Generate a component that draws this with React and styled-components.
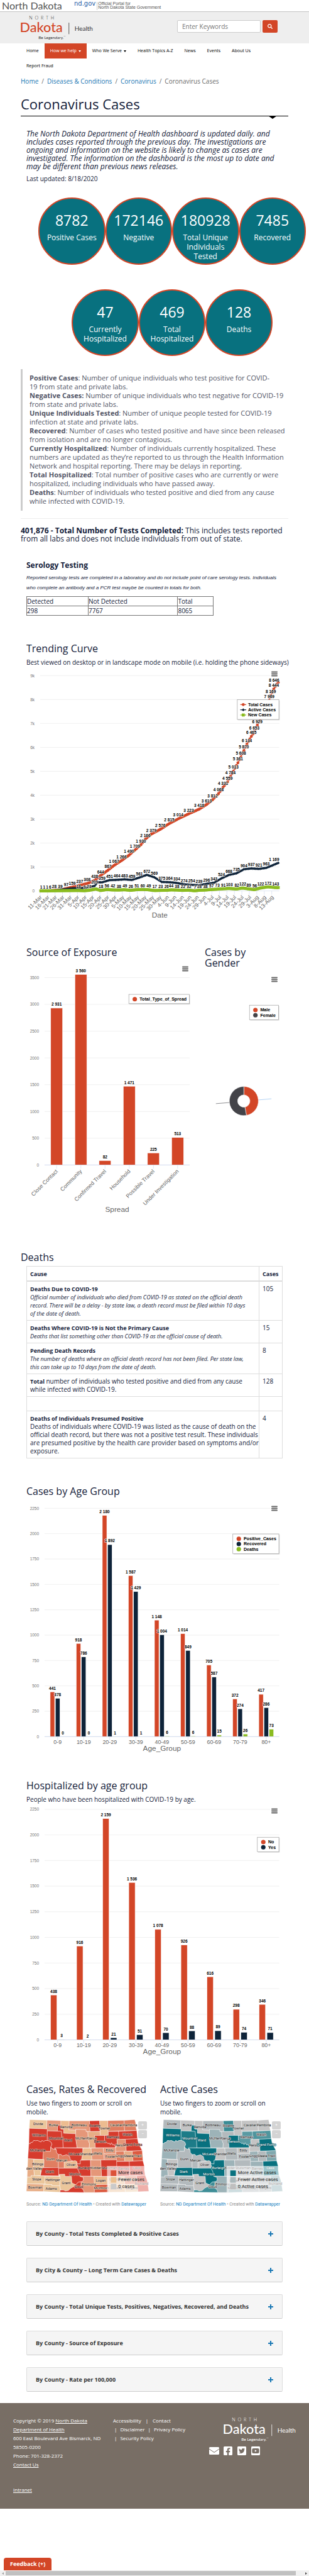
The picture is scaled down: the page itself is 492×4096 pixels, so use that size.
import React from "react";
import styled, { createGlobalStyle } from "styled-components";
import { FaSearch, FaFacebookSquare, FaTwitterSquare, FaYoutubeSquare } from "react-icons/fa";

const RED = "#d34627";
const NAVY = "#0e2339";
const GREEN = "#8bbc21";
const TEAL = "#08717f";
const INK = "#14213a";
const BLUE = "#1a78b4";
const HELV = '"Liberation Sans", Arial, sans-serif';

const Global = createGlobalStyle`
  *, *::before, *::after { box-sizing: border-box; }
  body {
    margin: 0;
    background: #fff;
    color: ${INK};
    font: 400 10px/14px "Open Sans", sans-serif;
  }
  p, h1, h2, h3, ul, dl, dd, blockquote { margin: 0; padding: 0; }
  ul { list-style: none; }
  svg { display: block; }
`;

/* ---------- frame ---------- */
const Page = styled.div`
  display: flex;
  flex-direction: column;
  min-height: 100vh;
`;
const Portal = styled.div`
  display: flex;
  height: 19px;
  padding-left: 3px;
  border-bottom: 1px solid #c4c4c4;
  color: #555;
`;
const PortalName = styled.span`
  width: 115px;
  font: 16px/18px Lato, sans-serif;
`;
const PortalSite = styled.a`
  padding-right: 2px;
  font: 10px/12px "DejaVu Sans", sans-serif;
  color: #2660a8;
  text-decoration: none;
`;
const PortalNote = styled.span`
  height: 13px;
  margin-top: 3px;
  padding-left: 1px;
  border-left: 1px solid #ccc;
  font: 7px/6px ${HELV};
`;
const Header = styled.header`
  display: flex;
  align-items: center;
  justify-content: space-between;
  height: 50px;
  padding: 0 50px 0 33px;
  background: #eee;
`;
const Search = styled.form`
  display: flex;
  gap: 3px;
  padding-top: 4px;
  margin-bottom: 8px;
`;
const SearchBox = styled.input`
  width: 133px;
  height: 20px;
  padding: 0 7px;
  border: 1px solid #ccc;
  border-radius: 2px;
  background: #fff;
  font: 10px "Open Sans", sans-serif;
  &::placeholder { color: #777; opacity: 1; }
`;
const SearchButton = styled.button`
  display: flex;
  align-items: center;
  justify-content: center;
  width: 24px;
  height: 20px;
  padding: 0;
  border: 0;
  border-radius: 2px;
  background: ${RED};
  color: #fff;
`;
const Nav = styled.nav`
  display: flex;
  flex-wrap: wrap;
  padding: 0 33px;
`;
const NavLink = styled.a`
  display: flex;
  align-items: center;
  gap: 3px;
  height: 24px;
  padding: 0 9px;
  font-size: 7px;
  text-decoration: none;
  color: ${(p) => (p.$active ? "#fff" : "#000")};
  background: ${(p) => (p.$active ? RED : "transparent")};
`;
const Caret = styled.i`
  border: 2px solid transparent;
  border-top: 3px solid currentColor;
  border-bottom: 0;
  margin-top: 1px;
`;
const Main = styled.main`
  padding: 5px 33px 18px;
`;
const Crumbs = styled.nav`
  display: flex;
  gap: 5px;
  color: #6b6b6b;
  a { color: ${BLUE}; text-decoration: none; }
`;
const Title = styled.h1`
  position: relative;
  margin-top: 14px;
  padding-bottom: 4px;
  border-bottom: 1px solid #000;
  font: 400 22px/30px "Open Sans", sans-serif;
  &::after {
    content: "";
    position: absolute;
    right: 18px;
    top: 100%;
    border: 7px solid transparent;
    border-top: 5px solid #000;
    border-bottom: 0;
  }
`;
const Inset = styled.section`
  padding: 0 9px;
  margin-top: ${(p) => p.$gap}px;
`;
const Section = styled.section`
  margin-top: ${(p) => p.$gap}px;
`;
const Intro = styled.p`
  font: italic 12px/13px "Open Sans", sans-serif;
`;
const Updated = styled.p`
  margin-top: 6px;
`;

/* ---------- figures in circles ---------- */
const Circles = styled.ul`
  display: flex;
  justify-content: center;
  margin: ${(p) => p.$gap}px -28px 0 28px;
`;
const Circle = styled.li`
  flex: 0 0 25%;
  aspect-ratio: 1;
  padding-top: 20px;
  border: 2px solid ${RED};
  border-radius: 50%;
  background: ${TEAL};
  color: #fff;
  text-align: center;
  font-size: 12px;
  line-height: 15px;
  b { display: block; margin-bottom: 6px; font: 400 23px/28px "Open Sans", sans-serif; }
  span { display: block; padding: 0 10px; }
`;

/* ---------- text blocks and tables ---------- */
const Definitions = styled.blockquote`
  margin-top: 21px;
  padding: 7px 0 8px 11px;
  border-left: 3px solid #ccc;
  color: #525566;
  font-size: 11px;
`;
const TotalTests = styled.p`
  margin-top: 12px;
  padding-top: 12px;
  border-top: 1px solid #eee;
  font-size: 12px;
  line-height: 13px;
`;
const SmallHeading = styled.h2`
  font: 700 12px/16px "Open Sans", sans-serif;
`;
const Note = styled.p`
  margin: 4px 0 5px;
  font: italic 8px/16px ${HELV};
`;
const Serology = styled.table`
  width: 73%;
  border: 1px solid #333;
  border-collapse: collapse;
  th, td { height: 15px; padding: 0; border: 1px solid #777; text-align: left; font-weight: 400; line-height: 14px; }
  th:nth-child(1) { width: 33%; }
  th:nth-child(2) { width: 48%; }
`;
const Heading = styled.h2`
  font: 400 16px/17px "Open Sans", sans-serif;
`;
const Sub = styled.p`
  margin-top: 6px;
  white-space: ${(p) => (p.$oneLine ? "nowrap" : "normal")};
`;
const DeathTable = styled.table`
  width: 100%;
  border-collapse: collapse;
  line-height: 13px;
  th, td { padding: 5px 0 4px 5px; border: 1px solid #ddd; text-align: left; vertical-align: top; }
  thead th { border-bottom: 2px solid #ddd; }
  th:last-child, td:last-child { width: 37px; }
  tr { height: 23px; }
  th, b, i { font-size: 9px; }
`;

/* ---------- charts ---------- */
const Split = styled.div`
  display: grid;
  grid-template-columns: ${(p) => p.$cols};
  gap: 18px;
  padding: 0 9px;
  margin-top: ${(p) => p.$gap}px;
`;
const Figure = styled.div`
  position: relative;
  margin-top: ${(p) => p.$gap}px;
  > svg { width: 100%; height: auto; overflow: visible; font-family: ${HELV}; }
`;
const MenuButton = styled.button`
  position: absolute;
  top: 4px;
  right: 8px;
  padding: 0;
  border: 0;
  background: none;
`;

const fmt = (v) => (v >= 1000 ? `${Math.floor(v / 1000)} ${String(v % 1000).padStart(3, "0")}` : String(v));

const Menu = () => (
  <MenuButton type="button" aria-label="Chart menu">
    <svg width="10" height="9" viewBox="0 0 10 9" stroke="#666" strokeWidth="2" strokeLinecap="round">
      <path d="M1 1.5H9M1 4.5H9M1 7.5H9" />
    </svg>
  </MenuButton>
);

const DataLabel = ({ x, y, children }) => (
  <text x={x} y={y} fontSize="11" fontWeight="700" textAnchor="middle" fill="#000" stroke="#fff" strokeWidth="2" strokeLinejoin="round" paintOrder="stroke">
    {children}
  </text>
);

const Legend = ({ x, y, width, items, line }) => (
  <g>
    <rect x={x + 2} y={y + 2} width={width} height={items.length * 14 + 11} fill="#000" opacity="0.15" />
    <rect x={x} y={y} width={width} height={items.length * 14 + 11} fill="#fff" stroke="#909090" />
    {items.map(([name, color], i) => {
      const cy = y + 13 + i * 14;
      return (
        <g key={name} fill={color}>
          {line && <path d={`M${x + 8} ${cy}h16`} stroke={color} strokeWidth="2" />}
          {!line && <circle cx={x + 16} cy={cy} r="6" />}
          {line && i === 0 && <circle cx={x + 16} cy={cy} r="4" />}
          {line && i === 1 && <path d={`M${x + 16} ${cy - 4}l4 4l-4 4l-4 -4z`} />}
          {line && i === 2 && <rect x={x + 12} y={cy - 4} width="8" height="8" />}
          <text x={x + 29} y={cy + 4} fontSize="12" fontWeight="700" fill="#000">{name}</text>
        </g>
      );
    })}
  </g>
);

const Grid = ({ left, right, top, bottom, ticks, cut }) => (
  <g>
    {ticks.map((t, i) => {
      const y = bottom - ((bottom - top) * i) / (ticks.length - 1);
      const last = i === ticks.length - 1;
      return (
        <g key={t}>
          <path d={`M${left} ${y}H${last && cut ? right - 24 : right}`} stroke={i ? "#e6e6e6" : "#ccd6eb"} />
          <text x={left - 15} y={y + 4} fontSize="11" textAnchor="end" fill="#777">{t}</text>
        </g>
      );
    })}
  </g>
);

const BarChart = ({ label, width, height, left, right, top, bottom, step, ticks, cut, cats, series, barWidth, pitch, axisTitle, titleY, slanted, legend }) => {
  const slot = (right - left) / cats.length;
  const unit = (bottom - top) / (step * (ticks.length - 1));
  return (
    <svg viewBox={`0 0 ${width} ${height}`} role="img" aria-label={label}>
      <Grid {...{ left, right, top, bottom, ticks, cut }} />
      {series.map((s, si) =>
        s.values.map((v, ci) => {
          const x = left + slot * (ci + 0.5) + (si - (series.length - 1) / 2) * pitch;
          const h = v * unit;
          return (
            <rect key={`${si}-${ci}`} x={x - barWidth / 2} y={bottom - h} width={barWidth} height={h} fill={s.color} stroke="#fff" />
          );
        })
      )}
      <path d={`M${left} ${bottom}H${right}`} stroke="#ccd6eb" />
      {series.map((s, si) =>
        s.values.map((v, ci) => (
          <DataLabel key={`${si}-${ci}`} x={left + slot * (ci + 0.5) + (si - (series.length - 1) / 2) * pitch} y={bottom - v * unit - 6}>
            {fmt(v)}
          </DataLabel>
        ))
      )}
      {cats.map((c, i) => {
        const x = left + slot * (i + 0.5);
        return (
          <g key={c}>
            <path d={`M${x} ${bottom}v10`} stroke="#ccd6eb" />
            {slanted ? (
              <text fontSize="15" fill="#666" textAnchor="end" transform={`translate(${x + 4} ${bottom + 18}) rotate(-45)`}>{c}</text>
            ) : (
              <text x={x} y={bottom + 19} fontSize="15" fill="#666" textAnchor="middle">{c}</text>
            )}
          </g>
        );
      })}
      <text x={(left + right) / 2} y={titleY} fontSize="20" fill="#666" textAnchor="middle">{axisTitle}</text>
      {legend}
    </svg>
  );
};

/* [day since 11 March, value] */
const TOTAL = [[0, 1], [5, 6], [9, 28], [13, 39], [17, 97], [21, 159], [26, 237], [31, 308], [36, 438], [40, 644], [45, 867], [49, 1067], [54, 1266], [59, 1490], [63, 1709], [67, 1930], [70, 2166], [74, 2379], [80, 2576], [86, 2815], [92, 3014], [99, 3223], [106, 3418], [111, 3613], [115, 3812], [119, 4068], [122, 4331], [125, 4559], [127, 4784], [129, 5013], [132, 5361], [134, 5608], [136, 5870], [138, 6134], [141, 6465], [143, 6653], [145, 6929], [153, 7969], [154, 8169], [156, 8444], [158, 8646]];
const ACTIVE = [[0, 1], [9, 20], [20, 100], [30, 130], [36, 209], [38, 359], [41, 359], [46, 451], [51, 464], [56, 483], [61, 459], [66, 561], [71, 672], [76, 569], [81, 375], [86, 364], [91, 334], [96, 274], [101, 254], [106, 239], [111, 296], [116, 343], [121, 524], [126, 668], [131, 735], [136, 904], [141, 937], [146, 921], [151, 963], [159, 1169]];
const NEW = [[0, 1], [2, 1], [4, 1], [6, 6], [25, 18], [29, 9], [32, 23], [37, 80], [40, 18], [44, 56], [48, 42], [52, 38], [56, 49], [60, 26], [64, 51], [68, 60], [72, 49], [76, 17], [80, 23], [84, 26], [87, 44], [91, 38], [95, 22], [99, 32], [103, 7], [106, 28], [110, 38], [114, 57], [118, 73], [122, 91], [126, 103], [131, 82], [135, 122], [139, 89], [143, 56], [147, 122], [152, 172], [157, 143]];
const DATES = "11-Mar 16-Mar 21-Mar 26-Mar 31-Mar 5-Apr 10-Apr 15-Apr 20-Apr 25-Apr 30-Apr 5-May 10-May 15-May 20-May 25-May 30-May 4-Jun 9-Jun 14-Jun 19-Jun 24-Jun 29-Jun 4-Jul 9-Jul 14-Jul 19-Jul 24-Jul 29-Jul 3-Aug 8-Aug 13-Aug".split(" ");

const daily = (keys) => {
  const out = [];
  for (let i = 0; i < keys.length - 1; i++) {
    const [a, va] = keys[i];
    const [b, vb] = keys[i + 1];
    for (let d = a; d < b; d++) out.push([d, va + ((vb - va) * (d - a)) / (b - a)]);
  }
  out.push(keys[keys.length - 1]);
  return out;
};

const TrendChart = () => {
  const px = (d) => 39 + d * 4.02;
  const py = (v) => 598 - v * 0.0643;
  const total = daily([...TOTAL, [159, 8720]]);
  const active = daily(ACTIVE);
  const fresh = daily([...NEW, [159, 140]]);
  const path = (pts) => "M" + pts.map(([d, v]) => `${px(d)} ${py(v)}`).join("L");
  return (
    <svg viewBox="0 0 690 690" role="img" aria-label="Trending curve">
      <Grid left={37} right={681} top={19} bottom={598} ticks={["0", "1k", "2k", "3k", "4k", "5k", "6k", "7k", "8k", "9k"]} cut />
      {DATES.map((t, i) => (
        <g key={t}>
          <path d={`M${37 + i * 20.12} 598v10`} stroke="#ccd6eb" />
          <text fontSize="15" fill="#666" textAnchor="end" transform={`translate(${43 + i * 20.12} 616) rotate(-45)`}>{t}</text>
        </g>
      ))}
      <path d={path(total)} stroke={RED} strokeWidth="2" fill="none" />
      {total.map(([d, v]) => <circle key={d} cx={px(d)} cy={py(v)} r="4" fill={RED} />)}
      <path d={path(active)} stroke={NAVY} strokeWidth="2" fill="none" />
      {active.map(([d, v]) => <path key={d} d={`M${px(d)} ${py(v) - 4}l4 4l-4 4l-4 -4z`} fill={NAVY} />)}
      {fresh.map(([d, v]) => <rect key={d} x={px(d) - 4} y={py(v) - 4} width="8" height="8" fill={GREEN} />)}
      {TOTAL.slice(2).map(([d, v]) => <DataLabel key={d} x={Math.min(px(d), 667)} y={py(v) - 6}>{fmt(v)}</DataLabel>)}
      {ACTIVE.filter(([d]) => d > 30 && d !== 38).map(([d, v]) => <DataLabel key={d} x={Math.min(px(d), 667)} y={py(v) - 6}>{fmt(v)}</DataLabel>)}
      {NEW.filter(([d]) => d !== 37).map(([d, v]) => <DataLabel key={d} x={px(d) + 1} y={py(v) - 6}>{v}</DataLabel>)}
      <text x="359" y="669" fontSize="20" fill="#666" textAnchor="middle">Date</text>
      <Legend line x={568} y={84} width={112} items={[["Total Cases", RED], ["Active Cases", NAVY], ["New Cases", GREEN]]} />
    </svg>
  );
};

const AGES = ["0-9", "10-19", "20-29", "30-39", "40-49", "50-59", "60-69", "70-79", "80+"];
const AGE_TICKS = [0, 250, 500, 750, 1000, 1250, 1500, 1750, 2000, 2250];

const GenderChart = () => (
  <svg viewBox="0 0 209 400" role="img" aria-label="Cases by gender">
    <path d="M144 337L179 334" stroke="#7cb5ec" />
    <path d="M66 344L30 347" stroke="#434348" />
    <path d="M105 301A39 39 0 0 1 111.800 378.400L107.900 356.200A16.500 16.500 0 0 0 105 323.500Z" fill={RED} stroke="#fff" />
    <path d="M111.800 378.400A39 39 0 1 1 105 301V323.500A16.500 16.500 0 1 0 107.900 356.200Z" fill="#434348" stroke="#fff" />
    <Legend x={120} y={83} width={78} items={[["Male", RED], ["Female", "#434348"]]} />
  </svg>
);

/* ---------- county maps ---------- */
const A = "#d63b2d", B = "#dc5a40", C = "#e07e61", D = "#e59779", E = "#e8ad86", F = "#ecbc90", G = "#ebc69b";
const L = "#c4c4c4", M = "#b3babd", N = "#9db3b8", T = TEAL;
/* name, outline, case colour, active colour, label x, label y */
const COUNTIES = [
  ["Divide", "57,22 197,27 194,97 53,92", G, M, 125, 66],
  ["Burke", "197,27 309,30 309,68 283,66 281,114 199,113 194,97", D, L, 248, 78],
  ["Renville", "309,30 376,32 374,104 428,106 428,136 331,132 331,100 309,98", F, L, 353, 93],
  ["Bottineau", "376,32 540,32 545,118 512,118 512,102 429,100 428,106 374,104", D, M, 456, 75],
  ["Rolette", "540,32 622,30 626,116 545,118", A, "#3a8b94", 583, 81],
  ["Towner", "622,30 688,30 692,148 628,150 626,116", F, L, 660, 99],
  ["Cavalier", "688,30 820,28 824,112 690,116", C, L, 757, 77],
  ["Pembina", "820,28 906,22 914,50 912,70 922,110 824,112", C, L, 869, 75],
  ["Williams", "53,92 198,97 199,190 182,190 170,198 156,190 148,203 120,190 106,193 90,190 78,206 66,206 62,216 50,214", A, T, 132, 158],
  ["Mountrail", "199,113 314,116 316,160 325,190 327,248 258,250 262,264 240,258 227,242 236,222 230,205 215,194 199,190", A, "#1d7c88", 270, 182],
  ["Ward", "283,66 309,68 309,98 331,100 331,132 428,136 431,190 440,248 327,248 325,190 316,160 314,116 281,114", A, T, 367, 197],
  ["McHenry", "429,100 512,102 512,118 527,120 531,190 540,215 538,250 440,248 431,190 428,136", D, N, 484, 183],
  ["Pierce", "527,118 626,118 628,150 582,150 582,175 587,246 586,250 538,250 540,215 531,190", E, M, 558, 183],
  ["Benson", "582,150 662,150 662,208 680,206 690,216 700,210 708,224 718,208 728,226 740,222 748,236 750,248 587,248", A, T, 626, 206],
  ["Ramsey", "692,118 776,116 778,180 762,182 766,238 748,236 740,222 728,226 718,208 708,224 700,210 690,216 680,206 662,208 662,150 692,148", A, "#5a9aa2", 730, 171],
  ["Walsh", "776,116 922,110 928,176 778,182", A, "#4f959d", 848, 153],
  ["Nelson", "762,182 830,180 838,276 752,280 750,248 766,236", D, L, 796, 236],
  ["Grand Forks", "830,180 928,176 936,215 955,250 966,272 838,276", A, T, 888, 234],
  ["McKenzie", "50,214 62,216 66,206 78,206 90,190 106,193 120,190 148,203 156,190 170,198 182,190 199,190 215,194 230,205 236,222 227,242 225,278 168,278 164,343 42,338", A, N, 122, 281],
  ["Dunn", "168,278 225,278 227,242 240,258 272,264 275,290 290,300 288,412 170,408 172,344 164,343", C, M, 226, 351],
  ["Mercer", "275,290 290,303 310,302 322,315 355,304 380,320 385,345 408,356 336,366 336,412 288,412 290,300", C, M, 316, 359],
  ["McLean", "258,250 486,252 486,290 476,346 466,350 466,380 440,378 438,360 408,356 385,345 380,320 355,304 322,315 310,302 290,303 275,290 272,264", A, T, 422, 308],
  ["Sheridan", "488,252 553,252 560,346 476,346 486,290", F, L, 519, 308],
  ["Wells", "553,252 652,250 656,298 660,346 560,346", D, M, 608, 305],
  ["Eddy", "652,250 750,248 752,298 656,298", D, L, 703, 281],
  ["Foster", "656,298 756,296 760,346 660,346", D, M, 710, 329],
  ["Griggs", "752,280 820,276 826,358 760,360", C, N, 792, 326],
  ["Steele", "820,276 886,276 892,356 826,358", E, M, 857, 326],
  ["Traill", "886,276 966,272 972,354 892,356", B, "#80a8ae", 931, 323],
  ["den Valley", "42,338 90,342 88,398 95,475 68,474 68,486 36,486", E, N, 94, 425],
  ["Billings", "90,342 172,344 170,408 148,408 144,473 95,475 88,398", G, L, 122, 391],
  ["Oliver", "336,366 408,356 425,352 438,362 438,378 446,398 440,414 336,412", F, L, 390, 395],
  ["Stark", "156,410 290,410 292,476 144,474", A, T, 219, 451],
  ["Burleigh", "466,350 548,348 552,478 462,478 455,440 440,414 446,398 438,378 466,380", A, T, 502, 421],
  ["Kidder", "548,348 632,348 638,480 552,478", D, N, 594, 421],
  ["Stutsman", "632,348 760,346 764,480 638,480", A, M, 700, 419],
  ["Barnes", "760,360 862,358 866,476 764,480", A, N, 816, 424],
  ["Cass", "862,358 972,354 984,400 984,430 990,470 866,476", A, T, 921, 421],
  ["Slope", "36,486 68,486 68,472 182,478 180,542 34,540", G, M, 113, 515],
  ["Hettinger", "182,478 302,480 300,556 236,556 236,546 180,542", G, M, 243, 518],
  ["Grant", "292,464 340,462 342,480 395,480 398,532 428,530 420,560 390,575 370,594 345,598 330,590 306,588 300,556 302,480", G, L, 351, 541],
  ["Morton", "290,414 440,414 455,440 462,478 490,488 492,512 480,522 450,526 430,548 398,532 395,480 342,480 340,462 292,464", A, T, 424, 473],
  ["Bowman", "34,540 172,544 170,602 30,600", E, M, 101, 578],
  ["Adams", "172,544 236,546 236,556 300,556 304,590 302,608 170,602", G, M, 231, 590],
  ["Emmons", "462,478 576,480 580,545 580,610 497,610 490,590 470,570 470,524 480,522 492,512 490,488", D, N, 536, 555],
  ["Sioux", "304,590 330,590 345,598 370,594 390,575 420,560 430,548 450,526 472,524 470,570 490,590 497,610 302,608", A, "#3f8e97", 454, 575],
  ["Logan", "576,480 690,482 692,545 580,548", F, L, 631, 521],
  ["McIntosh", "580,548 692,546 696,608 580,610", B, "#86abb1", 636, 586],
  ["LaMoure", "690,480 822,478 826,545 692,545", F, L, 757, 515],
  ["Ransom", "822,478 920,476 924,542 826,545", C, M, 873, 515],
  ["Dickey", "692,545 826,545 830,606 696,608", F, M, 762, 586],
  ["Sargent", "826,545 924,542 932,604 830,606", G, M, 880, 582],
  ["Richland", "920,476 990,470 1005,510 1012,545 1020,600 932,604", A, "#8aadb3", 961, 549],
];

const MapFigure = styled.div`
  position: relative;
  margin-top: 4px;
  > svg { width: 100%; height: auto; overflow: hidden; font-family: Roboto, sans-serif; }
`;
const ZoomGroup = styled.div`
  position: absolute;
  top: 4px;
  right: 3px;
  display: grid;
  gap: 1px;
`;
const ZoomButton = styled.button`
  width: 14px;
  height: 13px;
  padding: 0;
  border: 0;
  border-radius: 2px;
  background: #d4d4d4;
  color: #fff;
  font: 7px/13px Roboto, sans-serif;
`;
const Source = styled.p`
  margin-top: 13px;
  font: 7px/10px Roboto, sans-serif;
  color: #888;
  white-space: nowrap;
  a { color: #1380c0; text-decoration: none; }
`;

const CountyMap = ({ active }) => {
  const key = active
    ? [["More Active cases", T], ["Fewer Active cases", "#aab8bb"], ["0 Active cases", "#bfbfbf"]]
    : [["More cases", "#dc5238"], ["Fewer cases", "#ebc08f"], ["0 cases", "#cacaca"]];
  const boxX = active ? 567 : 682;
  return (
    <MapFigure>
      <svg viewBox="30 15 990 600" role="img" aria-label={active ? "Active cases by county" : "Cases by county"}>
        {COUNTIES.map(([n, pts, c1, c2]) => (
          <polygon key={n} points={pts} fill={active ? c2 : c1} stroke="#fff" strokeOpacity="0.7" strokeWidth="3" strokeLinejoin="round" />
        ))}
        {COUNTIES.map(([n, , c1, c2, x, y]) => {
          const dark = active && (c2 === T || c2 === "#1d7c88");
          return (
            <text key={n} x={x} y={y} fontSize="29" textAnchor="middle" paintOrder="stroke" strokeWidth="6" strokeLinejoin="round"
              fill={dark ? "#fff" : "#222"} stroke={dark ? "#0b5762" : active ? "#d6d9da" : c1 === A ? "#e8a397" : "#f2d3bd"}>
              {n}
            </text>
          );
        })}
        <rect x={boxX} y="396" width={1020 - boxX} height="216" fill="#fff" opacity="0.6" />
        {key.map(([t, c], i) => (
          <g key={t}>
            <rect x={boxX + 30} y={432 + i * 54} width="45" height="45" fill={c} />
            <text x={boxX + 91} y={462 + i * 56} fontSize="38" fill="#222">{t}</text>
          </g>
        ))}
      </svg>
      <ZoomGroup>
        <ZoomButton type="button" aria-label="Zoom in">+</ZoomButton>
        <ZoomButton type="button" aria-label="Zoom out">−</ZoomButton>
      </ZoomGroup>
      <Source>
        Source: <a href="#doh">ND Department Of Health</a> • Created with <a href="#dw">Datawrapper</a>
      </Source>
    </MapFigure>
  );
};

/* ---------- accordion and footer ---------- */
const Accordion = styled.div`
  display: grid;
  gap: 19px;
  margin-top: 22px;
  padding: 0 9px;
`;
const Panel = styled.button`
  display: flex;
  align-items: center;
  justify-content: space-between;
  height: 39px;
  padding: 0 14px;
  border: 1px solid #ddd;
  border-bottom-color: #ccc;
  border-radius: 2px;
  background: #f5f5f5;
  color: #333;
  font: 700 9px/14px "Open Sans", sans-serif;
  text-align: left;
`;
const Footer = styled.footer`
  display: grid;
  grid-template-columns: 159px 1fr 139px;
  height: 168px;
  padding: 21px 20px 0 21px;
  background: #786e65;
  color: #fff;
  font-size: 8px;
  a { color: #fff; }
`;
const Address = styled.div`
  a:last-child { display: block; margin-top: 26px; }
`;
const FooterLinks = styled.div`
  display: grid;
  align-content: start;
  a { text-decoration: none; }
  div { display: flex; gap: 5px; padding-left: 2px; }
  div:first-child { gap: 7px; padding: 0; }
`;
const FooterBrand = styled.div`
  padding-top: 1px;
`;
const FooterLogo = styled.div`
  padding-left: 23px;
`;
const Social = styled.div`
  display: flex;
  align-items: center;
  gap: 6px;
  padding-top: 6px;
`;
const Bottom = styled.div`
  display: flex;
  flex: 1;
  flex-direction: column;
  justify-content: flex-end;
  align-items: flex-start;
  min-height: 100px;
`;
const Feedback = styled.button`
  height: 20px;
  margin-left: 6px;
  padding: 0 10px;
  border: 0;
  border-radius: 4px 4px 0 0;
  background: ${RED};
  color: #fff;
  font: 700 9px/20px "Open Sans", sans-serif;
`;
const ScrollTrack = styled.div`
  display: flex;
  align-items: center;
  justify-content: space-between;
  width: 100%;
  height: 9px;
  padding: 0 3px;
  background: #f1f1f1;
  div { flex: 1; height: 7px; margin: 0 15px 0 3px; background: #c1c1c1; }
  i { border: 2px solid transparent; border-right: 3px solid #a3a3a3; border-left: 0; }
  i:last-child { border-right: 0; border-left: 3px solid #505050; }
`;

const Logo = ({ main, text }) => (
  <svg width="116" height="40" viewBox="165 120 585 200" fontFamily="Lato, sans-serif" fill={text} role="img" aria-label="North Dakota Health">
    <text x="232" y="155" fontSize="36" fontWeight="300">{"N\u00a0\u00a0O\u00a0\u00a0R\u00a0\u00a0T\u00a0\u00a0H"}</text>
    <text x="158" y="255" fontSize="109" fontWeight="500" fill={main}>Dakota</text>
    <path d="M552 180V272" stroke={text} strokeWidth="4" />
    <text x="598" y="247" fontSize="50">Health</text>
    <text x="307" y="309" fontSize="33">Be Legendary.</text>
    <text x="511" y="291" fontSize="10">TM</text>
  </svg>
);

const PANELS = [
  "By County - Total Tests Completed & Positive Cases",
  "By City & County – Long Term Care Cases & Deaths",
  "By County - Total Unique Tests, Positives, Negatives, Recovered, and Deaths",
  "By County - Source of Exposure",
  "By County - Rate per 100,000",
];

export default function App() {
  return (
    <Page>
      <Global />
      <Portal>
        <PortalName>North Dakota</PortalName>
        <PortalSite href="#nd">nd.gov</PortalSite>
        <PortalNote>Official Portal for<br />North Dakota State Government</PortalNote>
      </Portal>
      <Header>
        <Logo main={RED} text="#333" />
        <Search>
          <SearchBox type="search" aria-label="Enter Keywords" placeholder="Enter Keywords" />
          <SearchButton type="button" aria-label="Search"><FaSearch size={8} /></SearchButton>
        </Search>
      </Header>
      <Nav>
        <NavLink href="#home">Home</NavLink>
        <NavLink href="#help" $active>How we help <Caret /></NavLink>
        <NavLink href="#serve">Who We Serve <Caret /></NavLink>
        <NavLink href="#topics">Health Topics A-Z</NavLink>
        <NavLink href="#news">News</NavLink>
        <NavLink href="#events">Events</NavLink>
        <NavLink href="#about">About Us</NavLink>
        <NavLink href="#fraud">Report Fraud</NavLink>
      </Nav>
      <Main>
        <Crumbs aria-label="Breadcrumb">
          <a href="#home">Home</a><span>/</span>
          <a href="#diseases">Diseases &amp; Conditions</a><span>/</span>
          <a href="#corona">Coronavirus</a><span>/</span>
          <span>Coronavirus Cases</span>
        </Crumbs>
        <Title>Coronavirus Cases</Title>
        <Inset $gap={21}>
          <Intro>
            The North Dakota Department of Health dashboard is updated daily. and includes cases reported through the previous day. The investigations are ongoing and information on the website is likely to change as cases are investigated. The information on the dashboard is the most up to date and may be different than previous news releases.
          </Intro>
          <Updated>Last updated: 8/18/2020</Updated>
        </Inset>
        <Circles $gap={23}>
          <Circle><b>8782</b><span>Positive Cases</span></Circle>
          <Circle><b>172146</b><span>Negative</span></Circle>
          <Circle><b>180928</b><span>Total Unique Individuals Tested</span></Circle>
          <Circle><b>7485</b><span>Recovered</span></Circle>
        </Circles>
        <Circles $gap={39}>
          <Circle><b>47</b><span>Currently Hospitalized</span></Circle>
          <Circle><b>469</b><span>Total Hospitalized</span></Circle>
          <Circle><b>128</b><span>Deaths</span></Circle>
        </Circles>
        <Definitions>
          <p><b>Positive Cases</b>: Number of unique individuals who test positive for COVID-<br />19 from state and private labs.</p>
          <p><b>Negative Cases:</b> Number of unique individuals who test negative for COVID-19 from state and private labs.</p>
          <p><b>Unique Individuals Tested</b>: Number of unique people tested for COVID-19 infection at state and private labs.</p>
          <p><b>Recovered</b>: Number of cases who tested positive and have since been released from isolation and are no longer contagious.</p>
          <p><b>Currently Hospitalized</b>: Number of individuals currently hospitalized. These numbers are updated as they’re reported to us through the Health Information Network and hospital reporting. There may be delays in reporting.</p>
          <p><b>Total Hospitalized</b>: Total number of positive cases who are currently or were hospitalized, including individuals who have passed away.</p>
          <p><b>Deaths</b>: Number of individuals who tested positive and died from any cause while infected with COVID-19.</p>
        </Definitions>
        <TotalTests>
          <b>401,876 - Total Number of Tests Completed:</b> This includes tests reported from all labs and does not include individuals from out of state.
        </TotalTests>
        <Inset $gap={28}>
          <SmallHeading>Serology Testing</SmallHeading>
          <Note>Reported serology tests are completed in a laboratory and do not include point of care serology tests. Individuals who complete an antibody and a PCR test maybe be counted in totals for both.</Note>
          <Serology>
            <thead><tr><th>Detected</th><th>Not Detected</th><th>Total</th></tr></thead>
            <tbody><tr><td>298</td><td>7767</td><td>8065</td></tr></tbody>
          </Serology>
        </Inset>
        <Inset $gap={44}>
          <Heading>Trending Curve</Heading>
          <Sub $oneLine>Best viewed on desktop or in landscape mode on mobile (i.e. holding the phone sideways)</Sub>
          <Figure $gap={3}><TrendChart /><Menu /></Figure>
        </Inset>
        <Split $gap={35} $cols="266fr 124fr">
          <div>
            <Heading>Source of Exposure</Heading>
            <Figure $gap={9}>
              <BarChart
                label="Source of exposure" width={450} height={680} left={49} right={440} top={38} bottom={542}
                step={500} ticks={[0, 500, 1000, 1500, 2000, 2500, 3000, 3500]} slanted
                cats={["Close Contact", "Community", "Confirmed Travel", "Household", "Possible Travel", "Under Investigation"]}
                series={[{ color: RED, values: [2931, 3560, 82, 1471, 225, 513] }]}
                barWidth={32} pitch={0} axisTitle="Spread" titleY={668}
                legend={<Legend x={276} y={83} width={163} items={[["Total_Type_of_Spread", RED]]} />}
              />
              <Menu />
            </Figure>
          </div>
          <div>
            <Heading>Cases by Gender</Heading>
            <Figure $gap={9}><GenderChart /><Menu /></Figure>
          </div>
        </Split>
        <Section $gap={57}>
          <Heading>Deaths</Heading>
          <Inset $gap={5}>
            <DeathTable>
              <thead><tr><th>Cause</th><th>Cases</th></tr></thead>
              <tbody>
                <tr><td><b>Deaths Due to COVID-19</b><br /><i>Official number of individuals who died from COVID-19 as stated on the official death<br />record. There will be a delay - by state law, a death record must be filed within 10 days<br />of the date of death.</i></td><td>105</td></tr>
                <tr><td><b>Deaths Where COVID-19 is Not the Primary Cause</b><br /><i>Deaths that list something other than COVID-19 as the official cause of death.</i></td><td>15</td></tr>
                <tr><td><b>Pending Death Records</b><br /><i>The number of deaths where an official death record has not been filed. Per state law,<br />this can take up to 10 days from the date of death.</i></td><td>8</td></tr>
                <tr><td><b>Total</b> number of individuals who tested positive and died from any cause while infected with COVID-19.</td><td>128</td></tr>
                <tr><td /><td /></tr>
                <tr><td><b>Deaths of Individuals Presumed Positive</b><br />Deaths of individuals where COVID-19 was listed as the cause of death on the official death record, but there was not a positive test result. These individuals are presumed positive by the health care provider based on symptoms and/or exposure.</td><td>4</td></tr>
              </tbody>
            </DeathTable>
          </Inset>
        </Section>
        <Inset $gap={44}>
          <Heading>Cases by Age Group</Heading>
          <Figure $gap={10}>
            <BarChart
              label="Cases by age group" width={690} height={680} left={49} right={681} top={14} bottom={628}
              step={250} ticks={AGE_TICKS} cut cats={AGES} barWidth={12} pitch={14}
              series={[
                { color: RED, values: [441, 918, 2180, 1587, 1148, 1014, 705, 372, 417] },
                { color: NAVY, values: [378, 786, 1892, 1429, 1004, 849, 587, 274, 286] },
                { color: GREEN, values: [0, 0, 1, 1, 6, 6, 15, 26, 73] },
              ]}
              axisTitle="Age_Group" titleY={666}
              legend={<Legend x={556} y={83} width={124} items={[["Positive_Cases", RED], ["Recovered", NAVY], ["Deaths", GREEN]]} />}
            />
            <Menu />
          </Figure>
        </Inset>
        <Inset $gap={39}>
          <Heading>Hospitalized by age group</Heading>
          <Sub>People who have been hospitalized with COVID-19 by age.</Sub>
          <Figure $gap={3}>
            <BarChart
              label="Hospitalized by age group" width={690} height={680} left={49} right={681} top={10} bottom={630}
              step={250} ticks={AGE_TICKS} cut cats={AGES} barWidth={17} pitch={21}
              series={[
                { color: RED, values: [438, 916, 2159, 1536, 1078, 926, 616, 298, 346] },
                { color: NAVY, values: [3, 2, 21, 51, 70, 88, 89, 74, 71] },
              ]}
              axisTitle="Age_Group" titleY={668}
              legend={<Legend x={622} y={85} width={58} items={[["No", RED], ["Yes", NAVY]]} />}
            />
            <Menu />
          </Figure>
        </Inset>
        <Split $gap={41} $cols="1fr 1fr">
          <div>
            <Heading>Cases, Rates &amp; Recovered</Heading>
            <Sub>Use two fingers to zoom or scroll on mobile.</Sub>
            <CountyMap />
          </div>
          <div>
            <Heading>Active Cases</Heading>
            <Sub>Use two fingers to zoom or scroll on mobile.</Sub>
            <CountyMap active />
          </div>
        </Split>
        <Accordion>
          {PANELS.map((p) => (
            <Panel key={p} type="button" aria-expanded="false">
              {p}
              <svg width="8" height="8" viewBox="0 0 8 8" stroke={BLUE} strokeWidth="2"><path d="M0 4H8M4 0V8" /></svg>
            </Panel>
          ))}
        </Accordion>
      </Main>
      <Footer>
        <Address>
          Copyright © 2019 <a href="#nd">North Dakota<br />Department of Health</a><br />
          600 East Boulevard Ave Bismarck, ND<br />58505-0200<br />Phone: 701-328-2372<br />
          <a href="#contact">Contact Us</a><br />
          <a href="#intranet">Intranet</a>
        </Address>
        <FooterLinks>
          <div><a href="#access">Accessibility</a><span>|</span><a href="#contact">Contact</a></div>
          <div><span>|</span><a href="#disclaimer">Disclaimer</a><span>|</span><a href="#privacy">Privacy Policy</a></div>
          <div><span>|</span><a href="#security">Security Policy</a></div>
        </FooterLinks>
        <FooterBrand>
          <FooterLogo><Logo main="#fff" text="#fff" /></FooterLogo>
          <Social>
            <a href="#mail" aria-label="Email">
              <svg width="16" height="12" viewBox="0 0 16 12">
                <rect width="16" height="12" rx="1.500" fill="#fff" />
                <path d="M0 3L8 8.500L16 3" fill="none" stroke="#786e65" />
              </svg>
            </a>
            <a href="#fb" aria-label="Facebook"><FaFacebookSquare size={16} /></a>
            <a href="#tw" aria-label="Twitter"><FaTwitterSquare size={16} /></a>
            <a href="#yt" aria-label="YouTube"><FaYoutubeSquare size={16} /></a>
          </Social>
        </FooterBrand>
      </Footer>
      <Bottom>
        <Feedback type="button">Feedback (+)</Feedback>
        <ScrollTrack><i /><div /><i /></ScrollTrack>
      </Bottom>
    </Page>
  );
}
